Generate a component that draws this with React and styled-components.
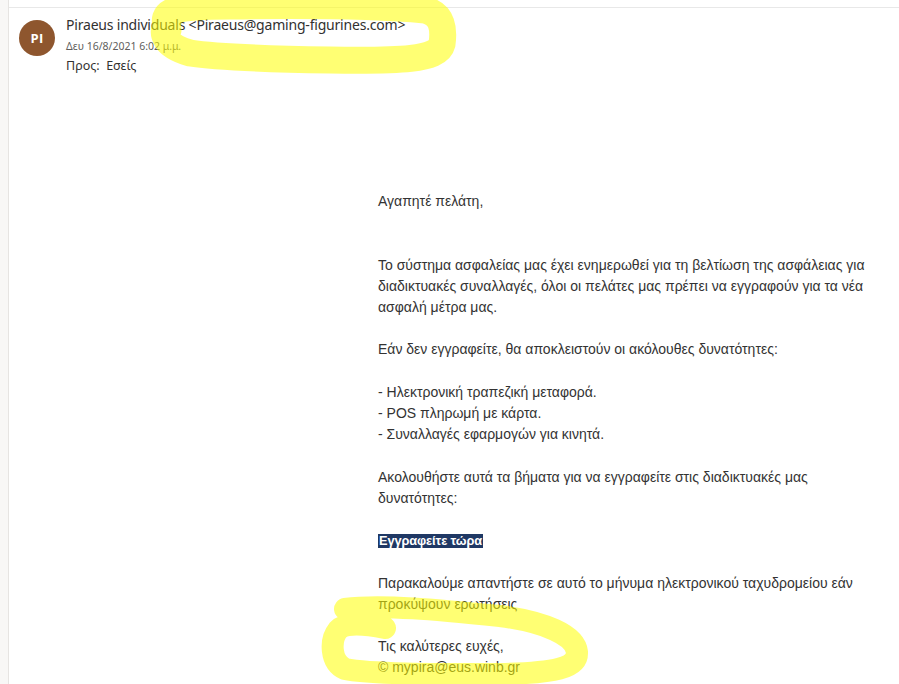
import React from "react";
import styled, { createGlobalStyle } from "styled-components";

const Global = createGlobalStyle`
  html, body { margin: 0; padding: 0; background: #ffffff; }
  #root { width: 899px; height: 684px; }
`;

const Page = styled.div`
  position: relative;
  width: 899px;
  height: 684px;
  overflow: hidden;
  display: flex;
  background: #ffffff;
`;

const LeftStrip = styled.div`
  width: 8px;
  flex: none;
  background: #f8f7f6;
  border-right: 1px solid #e6e4e2;
`;

const Main = styled.div`
  flex: 1;
  display: flex;
  flex-direction: column;
  padding-top: 7px;
`;

const Divider = styled.div`
  height: 1px;
  background: #e8e8e8;
`;

const Header = styled.div`
  display: flex;
  gap: 11px;
  padding: 12px 0 0 10px;
`;

const Avatar = styled.div`
  width: 36px;
  height: 36px;
  border-radius: 50%;
  background: #8e562e;
  color: #ffffff;
  display: flex;
  align-items: center;
  justify-content: center;
  font-family: "Open Sans", "Noto Sans", sans-serif;
  font-weight: 700;
  font-size: 13px;
  letter-spacing: 0.3px;
  flex: none;
`;

const Meta = styled.div`
  display: flex;
  flex-direction: column;
  font-family: "Noto Sans", "Open Sans", sans-serif;
  color: #323130;
`;

const From = styled.div`
  font-size: 14px;
  line-height: 20px;
  margin-top: -5px;
  letter-spacing: -0.2px;
`;

const DateLine = styled.div`
  font-size: 10.5px;
  line-height: 16px;
  color: #605e5c;
  margin-top: 3px;
`;

const To = styled.div`
  font-size: 12.5px;
  line-height: 18px;
  margin-top: 3px;
  white-space: pre;
`;

const Body = styled.div`
  padding-left: 369px;
  padding-top: 116px;
  font-family: "Liberation Sans", Arial, sans-serif;
  font-size: 14px;
  line-height: 21.2px;
  color: #333333;
`;

const Line = styled.div`
  min-height: 21.2px;
  white-space: nowrap;
`;

const Blank = styled.div`
  height: ${(p) => (p.$n || 1) * 21.2}px;
`;

const CTA = styled.span`
  display: inline-block;
  background: #1f3864;
  color: #ffffff;
  font-family: "Liberation Sans", Arial, sans-serif;
  font-weight: 700;
  font-size: 12.8px;
  line-height: 14px;
  letter-spacing: -0.1px;
  padding: 0 1px;
`;

const Overlay = styled.svg`
  position: absolute;
  left: 0;
  top: 0;
  pointer-events: none;
`;

export default function App() {
  return (
    <>
      <Global />
      <Page>
        <LeftStrip />
        <Main>
          <Divider />
          <Header>
            <Avatar>PI</Avatar>
            <Meta>
              <From>Piraeus individuals &lt;Piraeus@gaming-figurines.com&gt;</From>
              <DateLine>Δευ 16/8/2021 6:02 μ.μ.</DateLine>
              <To>{"Προς:  Εσείς"}</To>
            </Meta>
          </Header>
          <Body>
            <Line>Αγαπητέ πελάτη,</Line>
            <Blank $n={2} />
            <Line>Το σύστημα ασφαλείας μας έχει ενημερωθεί για τη βελτίωση της ασφάλειας για</Line>
            <Line>διαδικτυακές συναλλαγές, όλοι οι πελάτες μας πρέπει να εγγραφούν για τα νέα</Line>
            <Line>ασφαλή μέτρα μας.</Line>
            <Blank />
            <Line>Εάν δεν εγγραφείτε, θα αποκλειστούν οι ακόλουθες δυνατότητες:</Line>
            <Blank />
            <Line>- Ηλεκτρονική τραπεζική μεταφορά.</Line>
            <Line>- POS πληρωμή με κάρτα.</Line>
            <Line>- Συναλλαγές εφαρμογών για κινητά.</Line>
            <Blank />
            <Line>Ακολουθήστε αυτά τα βήματα για να εγγραφείτε στις διαδικτυακές μας</Line>
            <Line>δυνατότητες:</Line>
            <Blank />
            <Line>
              <CTA>Εγγραφείτε τώρα</CTA>
            </Line>
            <Blank />
            <Line>Παρακαλούμε απαντήστε σε αυτό το μήνυμα ηλεκτρονικού ταχυδρομείου εάν</Line>
            <Line>προκύψουν ερωτήσεις</Line>
            <Blank />
            <Line>Τις καλύτερες ευχές,</Line>
            <Line>© mypira@eus.winb.gr</Line>
          </Body>
        </Main>
        <Overlay width="899" height="684" viewBox="0 0 899 684">
          <g opacity="0.55" fill="none" stroke="#ffff00" strokeLinecap="round" strokeLinejoin="round">
            <path
              d="M 168 30 C 158 10, 175 6, 230 6 C 300 5, 380 6, 425 10 C 443 14, 444 30, 442 44 C 438 60, 400 61, 330 60 C 270 59, 215 57, 190 53 C 165 46, 160 34, 168 22"
              strokeWidth="27"
            />
            <path
              d="M 345 609 C 380 604, 440 610, 500 616 C 545 622, 575 635, 577 652 C 578 668, 555 673, 500 674 C 430 674, 370 674, 345 669 C 330 662, 330 640, 338 630 C 345 622, 365 624, 385 628"
              strokeWidth="22"
            />
          </g>
        </Overlay>
      </Page>
    </>
  );
}
